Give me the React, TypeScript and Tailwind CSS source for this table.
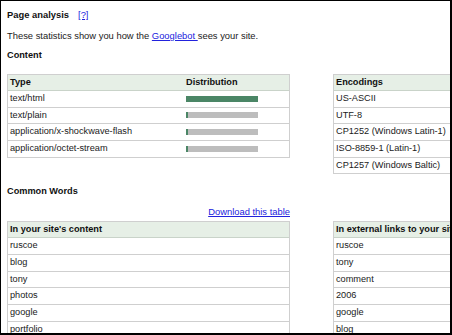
import type { ReactNode } from 'react'

const font = { fontFamily: '"Liberation Sans", Arial, sans-serif' }

type Dist = { type: string; share: number }

const contentTypes: Dist[] = [
  { type: 'text/html', share: 100 },
  { type: 'text/plain', share: 2 },
  { type: 'application/x-shockwave-flash', share: 2 },
  { type: 'application/octet-stream', share: 2 },
]

const encodings = [
  'US-ASCII',
  'UTF-8',
  'CP1252 (Windows Latin-1)',
  'ISO-8859-1 (Latin-1)',
  'CP1257 (Windows Baltic)',
]

const siteWords = ['ruscoe', 'blog', 'tony', 'photos', 'google', 'portfolio']
const linkWords = ['ruscoe', 'tony', 'comment', '2006', 'google', 'blog']

function HeadRow({ children }: { children: ReactNode }) {
  return (
    <div className="flex h-[16px] items-center border-b border-[#c9d3c9] bg-[#e6efe6] px-[2px] font-bold text-[9.2px] text-[#111] whitespace-nowrap">
      {children}
    </div>
  )
}

function Row({ children }: { children: ReactNode }) {
  return (
    <div className="flex h-[16.67px] items-center border-b border-[#cfcfcf] px-[2px] text-[9.2px] text-[#1a1a1a]">
      {children}
    </div>
  )
}

// bar from the distribution column
function Bar({ share }: { share: number }) {
  return (
    <div className="flex h-[6px] w-[72px] bg-[#bdbdbd]">
      <div className="h-full bg-[#4b8666]" style={{ width: `${Math.max(2, (share / 100) * 72)}px` }} />
    </div>
  )
}

export default function App() {
  return (
    <div
      className="h-[335px] w-[452px] overflow-hidden border-t border-l border-r-2 border-b-2 border-black bg-white"
      style={font}
    >
      <div className="w-[600px] pl-[6px]">
        {/* Title */}
        <div className="mt-[8px] flex h-[12px] items-center text-[9.4px] font-bold text-[#111]">
          Page analysis
          <a href="#" className="ml-[9px] font-normal text-[#2222dd] underline">
            [?]
          </a>
        </div>
        <p className="mt-[9px] flex h-[12px] items-center text-[9.4px] text-[#1a1a1a]">
          These statistics show you how the&nbsp;
          <a href="#" className="text-[#2222dd] underline">
            Googlebot&nbsp;
          </a>
          sees your site.
        </p>
        <div className="mt-[8px] flex h-[12px] items-center text-[9.2px] font-bold text-[#111]">Content</div>

        {/* Content tables */}
        <div className="mt-[12px] flex items-start gap-[43px]">
          <div className="w-[283px] border-l border-r border-t border-[#cfcfcf]">
            <HeadRow>
              <span className="w-[176px]">Type</span>
              <span>Distribution</span>
            </HeadRow>
            {contentTypes.map((c) => (
              <Row key={c.type}>
                <span className="w-[176px]">{c.type}</span>
                <Bar share={c.share} />
              </Row>
            ))}
          </div>
          <div className="w-[200px] border-l border-t border-[#cfcfcf]">
            <HeadRow>Encodings</HeadRow>
            {encodings.map((e) => (
              <Row key={e}>{e}</Row>
            ))}
          </div>
        </div>

        {/* Common words */}
        <div className="mt-[12px] flex h-[12px] items-center text-[9.2px] font-bold text-[#111]">Common Words</div>
        <div className="mt-[7px] flex w-[283px] justify-end">
          <a href="#" className="text-[9.4px] text-[#2222dd] underline">
            Download this table
          </a>
        </div>
        <div className="mt-[2px] flex items-start gap-[43px]">
          <div className="w-[283px] border-l border-r border-t border-[#cfcfcf]">
            <HeadRow>In your site's content</HeadRow>
            {siteWords.map((w) => (
              <Row key={w}>{w}</Row>
            ))}
          </div>
          <div className="w-[200px] border-l border-t border-[#cfcfcf]">
            <HeadRow>In external links to your site</HeadRow>
            {linkWords.map((w) => (
              <Row key={w}>{w}</Row>
            ))}
          </div>
        </div>
      </div>
    </div>
  )
}
